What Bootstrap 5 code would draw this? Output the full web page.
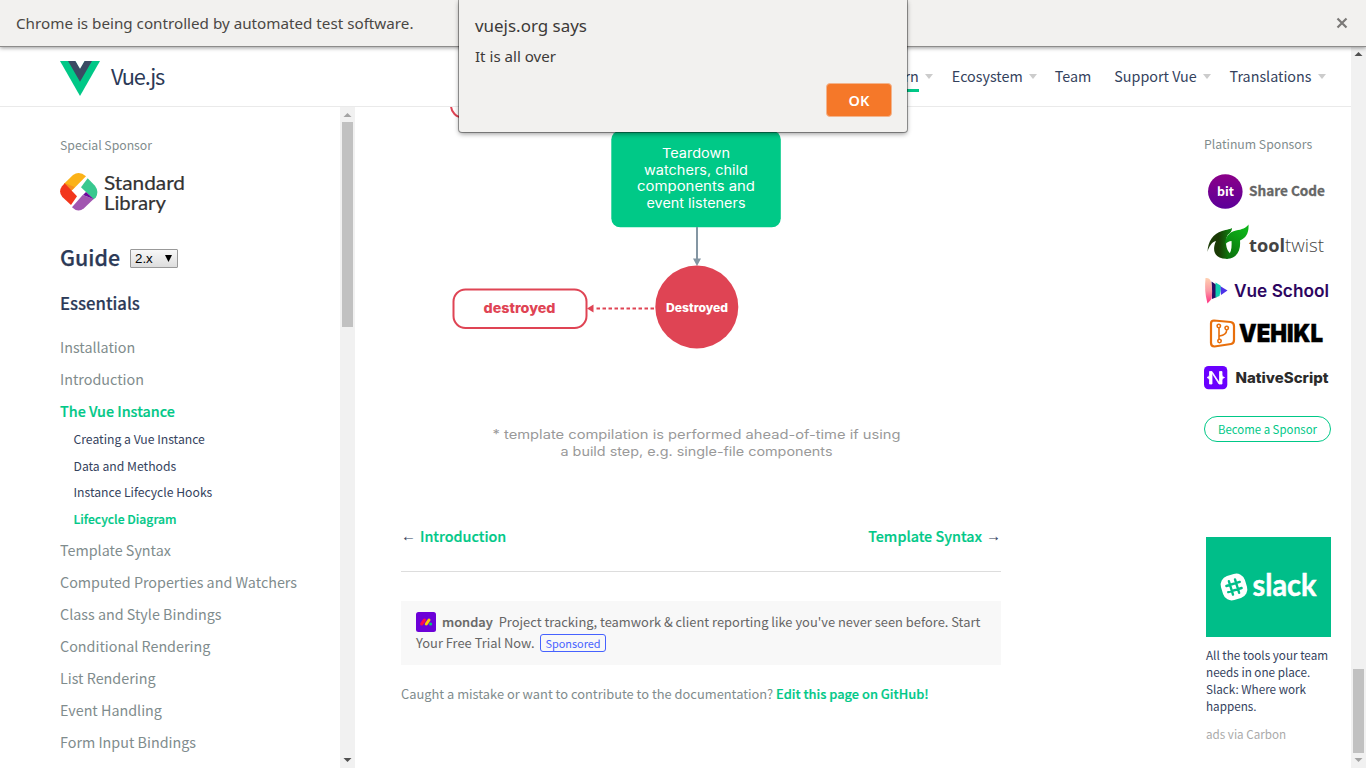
<!DOCTYPE html>
<html lang="en">
<head>
<meta charset="utf-8">
<title>The Vue Instance — Vue.js</title>
<link href="https://cdn.jsdelivr.net/npm/bootstrap@5.3.0/dist/css/bootstrap.min.css" rel="stylesheet">
<style>
body{font-family:"Noto Sans CJK JP",sans-serif;font-size:14.34px;color:#34425d;width:1366px;height:768px}
a{text-decoration:none;color:inherit}
svg{display:block}
.infobar{height:47px;background:#f2f1ef;border-bottom:1px solid #8d8c8b;box-shadow:0 1px 4px rgba(0,0,0,.4);padding:0 18px 0 16px;font-family:"Noto Sans",sans-serif;font-size:15.21px;color:#4a4744;z-index:3}
.body-row,.columns{min-height:0}
.topnav{height:60px;border-bottom:1px solid #eaeaea;padding:0 25.500px 1px 60px}
.brand-name{font-size:21.8px;line-height:30px;margin-left:11px;color:#2c3a57;letter-spacing:-1.15px}
.nav-entry{line-height:24px;color:#34425d;margin-left:19px}
.nav-entry.team{margin-left:18px}
.caret{border:4px solid transparent;border-top:5px solid #ccc;border-bottom:0;margin-left:6px}
.learn-text{box-shadow:0 3px #00c887;padding-bottom:1px;margin-bottom:-1px}
.bar-track{width:15px;background:#f1f1f1}
.bar-thumb{width:11px;background:#c1c1c1}
.side-pane{width:340px;padding:28px 0 0 60px}
.side-note{font-size:12.24px;line-height:20px;color:#7f8c8d}
.guide-head{font-size:21.4px;line-height:30px;font-weight:500;color:#2c3a57;margin-top:22px;-webkit-text-stroke:.25px}
.ver{width:48px;height:19px;border:1px solid #999;border-radius:1px;background:linear-gradient(#f8f8f8,#ddd);font:13.3px/17px "Liberation Sans",sans-serif;-webkit-text-stroke:0;color:#000;padding:0 5px 0 4px;margin:3px 0 0 10px}
.part{font-size:16.7px;line-height:24px;font-weight:500;color:#2c3a57;margin-top:19px;-webkit-text-stroke:.2px}
.menu-list{margin-top:16px}
.menu-list>li{line-height:32px;height:32px;color:#7f8c8d;white-space:nowrap}
.menu-list>li.now,.sub-list .now,.green{color:#00c887;font-weight:500;-webkit-text-stroke:.2px}
.menu-list>li.subs{height:107px;margin:-1px 0 1px 13.5px}
.sub-list li{font-size:12.2px;line-height:26.7px;height:26.7px;color:#34425d}
.doc{width:600px;margin-left:46px}
.pager{line-height:24px;border-bottom:1px solid #ddd;height:48px}
.arrow{font:15px/24px "Liberation Sans",sans-serif}
.ad{background:#f8f8f8;margin-top:29px;height:64px;padding:10px 15px;font-size:12.9px;line-height:21.4px;color:#666;white-space:nowrap}
.ad-name{font-weight:500;margin:0 6px;-webkit-text-stroke:.2px}
.spon{border:1px solid #4662ff;border-radius:3px;color:#4662ff;font-size:10.9px;line-height:16px;padding:0 4px;height:18px;margin-left:6px}
.foot{font-size:12.87px;line-height:24px;color:#7f8c8d;margin-top:16.5px}
.right-pane{width:147px;margin-left:203px;padding-top:27px}
.become{width:127px;height:26px;border:1px solid #00c887;border-radius:13px;color:#00c887;font-size:11.4px;line-height:24.500px;margin-top:16px}
.slack-box{margin:95px 0 0 2px}
.slack-copy{font-size:11.7px;line-height:17px;margin:9px 0 0 2px}
.via{font-size:11.65px;line-height:17px;color:#aaa;margin:11px 0 0 2px}
.js-dialog{left:459px;top:0;width:448px;height:132px;background:#f2f1ef;border-radius:0 0 3px 3px;box-shadow:0 0 0 1px rgba(0,0,0,.35),0 2px 5px rgba(0,0,0,.4);z-index:5;padding:13px 15px 0 16px;font-family:"Noto Sans",sans-serif;color:#3d3a38}
.dlg-title{font-size:16.95px;line-height:26px}
.dlg-text{font-size:15.1px;line-height:24px;margin-top:5px}
.dlg-ok{width:66px;height:34px;background:#f57829;border:1px solid #f3b48c;border-radius:4px;color:#fff;font:600 14.500px/32px "Noto Sans",sans-serif;margin-top:15px}
.diagram{font-family:Inter,sans-serif}
</style>
</head>
<body class="overflow-hidden position-relative d-flex flex-column bg-white">
<div class="infobar d-flex align-items-center justify-content-between flex-shrink-0 position-relative">
  <span>Chrome is being controlled by automated test software.</span>
  <svg width="12" height="12" viewBox="0 0 12 12"><path d="M1.500 1.500l9 9M10.500 1.500l-9 9" stroke="#7b7977" stroke-width="2.200"/></svg>
</div>
<div class="body-row d-flex flex-fill">
  <div class="d-flex flex-column flex-fill">
    <nav class="topnav d-flex align-items-center justify-content-between flex-shrink-0">
      <a class="d-flex align-items-center" href="#">
        <svg class="mt-1" width="40" height="35" viewBox="0 0 40 35"><path d="M0 0h40L20 35z" fill="#00c887"/><path d="M8 0h7.500L20 7.500 24.500 0H32L20 20.700z" fill="#3a4a63"/><path d="M15.500 0h9L20 7.800z" fill="#fff"/></svg>
        <span class="brand-name">Vue.js</span>
      </a>
      <div class="d-flex align-items-center">
        <a class="nav-entry d-flex align-items-center"><span class="learn-text">Learn</span><i class="caret"></i></a>
        <a class="nav-entry d-flex align-items-center">Ecosystem<i class="caret"></i></a>
        <a class="nav-entry team">Team</a>
        <a class="nav-entry d-flex align-items-center ps-1">Support Vue<i class="caret"></i></a>
        <a class="nav-entry d-flex align-items-center">Translations<i class="caret"></i></a>
      </div>
    </nav>
    <div class="columns d-flex flex-fill">
      <aside class="side-pane overflow-hidden flex-shrink-0">
        <div class="side-note">Special Sponsor</div>
        <svg style="margin-top:10px" width="130" height="55" viewBox="60 165 130 55">
          <g transform="translate(40 165) scale(.3333)">
            <path d="M72 56L99 30Q118 16 138 34L98 74L76 68z" fill="#fbb217"/>
            <path d="M73 54L104 66L92 80z" fill="#f7901e"/>
            <path d="M74 55L111 94L93 120L67 96Q54 80 66 64z" fill="#f2361c"/>
            <path d="M143 40L165 62Q178 80 167 98L161 103L123 67z" fill="#38c88f"/>
            <path d="M128 90L161 102L132 130Q114 145 96 127z" fill="#a155b0"/>
            <path d="M138 81L162 103L129 90z" fill="#6a0a9a"/>
          </g>
          <g font-family="Lato,sans-serif" font-size="20" fill="#333" stroke="#333" stroke-width=".2">
            <text x="104" y="189.600" textLength="81" lengthAdjust="spacingAndGlyphs">Standard</text>
            <text x="104" y="210.200" textLength="62" lengthAdjust="spacingAndGlyphs">Library</text>
          </g>
        </svg>
        <div class="guide-head d-flex align-items-center">Guide
          <span class="ver d-flex justify-content-between align-items-center"><span>2.x</span><svg width="7" height="7" viewBox="0 0 7 7"><path d="M0 0h7L3.500 7z"/></svg></span>
        </div>
        <div class="part">Essentials</div>
        <ul class="menu-list list-unstyled mb-0">
          <li>Installation</li>
          <li>Introduction</li>
          <li class="now">The Vue Instance</li>
          <li class="subs">
            <ul class="sub-list list-unstyled">
              <li>Creating a Vue Instance</li>
              <li>Data and Methods</li>
              <li>Instance Lifecycle Hooks</li>
              <li class="now">Lifecycle Diagram</li>
            </ul>
          </li>
          <li>Template Syntax</li>
          <li>Computed Properties and Watchers</li>
          <li>Class and Style Bindings</li>
          <li>Conditional Rendering</li>
          <li>List Rendering</li>
          <li>Event Handling</li>
          <li>Form Input Bindings</li>
        </ul>
      </aside>
      <div class="bar-track d-flex flex-column align-items-center flex-shrink-0">
        <svg width="15" height="15" viewBox="0 0 15 15"><path d="M3.500 10L7.500 6l4 4z" fill="#a3a3a3"/></svg>
        <div class="bar-thumb" style="height:205px"></div>
        <svg class="mt-auto" width="15" height="15" viewBox="0 0 15 15"><path d="M3.500 5l4 4 4-4z" fill="#505050"/></svg>
      </div>
      <main class="doc flex-shrink-0">
        <svg class="diagram" width="600" height="417" viewBox="401 107 600 417">
          <rect x="451" y="78" width="133" height="39.500" rx="12" fill="#fff" stroke="#df4454" stroke-width="2"/>
          <rect x="611.300" y="130.500" width="169.500" height="96.800" rx="9" fill="#00c987"/>
          <g fill="#fff" font-size="13" text-anchor="middle">
            <text x="696" y="158" textLength="68" lengthAdjust="spacingAndGlyphs">Teardown</text>
            <text x="696" y="174.700" textLength="104" lengthAdjust="spacingAndGlyphs">watchers, child</text>
            <text x="696" y="191.400" textLength="118" lengthAdjust="spacingAndGlyphs">components and</text>
            <text x="696" y="208" textLength="99" lengthAdjust="spacingAndGlyphs">event listeners</text>
          </g>
          <path d="M697 227v33" stroke="#8496a3" stroke-width="2"/>
          <path d="M693 258.500h8l-4 7.500z" fill="#8496a3"/>
          <circle cx="696.800" cy="307" r="41.500" fill="#df4454"/>
          <text x="697" y="312" fill="#fff" font-size="11.500" font-weight="800" text-anchor="middle" textLength="62" lengthAdjust="spacingAndGlyphs">Destroyed</text>
          <path d="M654 308.500H595" stroke="#df4454" stroke-width="2" stroke-dasharray="3.500 2.500"/>
          <path d="M587 308.500l6.500-4v8z" fill="#df4454"/>
          <rect x="453.500" y="289.500" width="133" height="38.500" rx="12" fill="#fff" stroke="#df4454" stroke-width="2"/>
          <text x="519.500" y="313" fill="#df4454" font-size="13.500" font-weight="800" text-anchor="middle" textLength="72" lengthAdjust="spacingAndGlyphs">destroyed</text>
          <g fill="#999" font-size="12.800" text-anchor="middle">
            <text x="696.500" y="439" textLength="408" lengthAdjust="spacingAndGlyphs">* template compilation is performed ahead-of-time if using</text>
            <text x="696.500" y="456" textLength="272" lengthAdjust="spacingAndGlyphs">a build step, e.g. single-file components</text>
          </g>
        </svg>
        <div class="pager d-flex justify-content-between">
          <div class="d-flex gap-1"><span class="arrow">←</span><a class="green" href="#">Introduction</a></div>
          <div class="d-flex gap-1"><a class="green" href="#">Template Syntax</a><span class="arrow">→</span></div>
        </div>
        <div class="ad">
          <div class="d-flex">
            <svg style="margin-top:1px" width="20" height="20" viewBox="0 0 20 20"><rect width="20" height="20" rx="2.500" fill="#6c00d8"/><path d="M5.600 12L8.500 8" stroke="#ff0a48" stroke-width="3" stroke-linecap="round"/><path d="M10.300 12L13 8" stroke="#ffcb00" stroke-width="3" stroke-linecap="round"/><circle cx="14.600" cy="12" r="1.600" fill="#00ca72"/></svg>
            <span class="ad-name">monday</span>
            <span>Project tracking, teamwork &amp; client reporting like you've never seen before. Start</span>
          </div>
          <div class="d-flex align-items-center"><span>Your Free Trial Now.</span><span class="spon">Sponsored</span></div>
        </div>
        <div class="foot">Caught a mistake or want to contribute to the documentation? <a class="green" href="#">Edit this page on GitHub!</a></div>
      </main>
      <aside class="right-pane flex-shrink-0">
        <div class="side-note">Platinum Sponsors</div>
        <svg style="margin-top:14px" width="127" height="48" viewBox="1204 168 127 48">
          <defs><linearGradient id="gBit" x2="0" y2="1"><stop stop-color="#8b0088"/><stop offset="1" stop-color="#5c0099"/></linearGradient></defs>
          <circle cx="1225.300" cy="191.500" r="17.300" fill="url(#gBit)"/>
          <g font-weight="700" font-size="12.500"><text x="1217" y="196" fill="#fff" textLength="17" lengthAdjust="spacingAndGlyphs">bit</text><text x="1249" y="196" fill="#666" stroke="#666" stroke-width=".3" font-size="13.500" textLength="76" lengthAdjust="spacingAndGlyphs">Share Code</text></g>
        </svg>
        <svg width="127" height="48" viewBox="1204 216 127 48">
          <defs><linearGradient id="gDark"><stop stop-color="#1c3c08"/><stop offset=".45" stop-color="#1a3a05"/><stop offset="1" stop-color="#0c8a10"/></linearGradient><linearGradient id="gLite" x1="0" y1="1" x2=".5" y2="0"><stop stop-color="#0b6b0c"/><stop offset="1" stop-color="#0cb218"/></linearGradient></defs>
          <path d="M1207.500 252C1208 241 1213 234 1222 231C1227 229.500 1231 229 1232 228C1232 231 1230.500 233 1228 234.500C1225 239 1225 250 1231 254L1228 258.700C1216 259.500 1211 252 1216 241C1212 242 1209 246 1207.500 252z" fill="url(#gDark)"/>
          <path d="M1248.500 224.500C1249 233 1246 238 1240 240.500C1241 250 1237 259.500 1225.500 258.700C1231 254 1232 249 1231.500 241C1229 241 1227 242 1225 245C1225 237 1229 232 1236 230.500C1242 229.500 1246 228 1248.500 224.500z" fill="url(#gLite)"/>
          <g font-family="Open Sans,sans-serif" font-size="18" fill="#444"><text x="1249" y="251.500" font-weight="700" textLength="36" lengthAdjust="spacingAndGlyphs">tool</text><text x="1285" y="251.500" font-weight="300" textLength="39" lengthAdjust="spacingAndGlyphs">twist</text></g>
        </svg>
        <svg width="127" height="48" viewBox="1204 264 127 48">
          <defs><linearGradient id="gPink" x2="0" y2="1"><stop stop-color="#ffd0b0"/><stop offset=".5" stop-color="#fb9aa5"/><stop offset="1" stop-color="#ff2f80"/></linearGradient></defs>
          <path d="M1220 286L1227.500 290.500L1221 295z" fill="#4d32e8"/>
          <path d="M1211.500 281.500L1218 286L1217 297L1212 299z" fill="#2a0d66"/>
          <path d="M1215.500 297.500V282.500L1220.500 285.500Q1221 291 1219.500 296z" fill="#10cdb0"/>
          <path d="M1205.500 278Q1210 277.500 1211 282Q1213 291 1211.500 299L1207.500 303.500Q1204 291 1205.500 278z" fill="url(#gPink)"/>
          <text x="1234" y="296.600" font-family="Inter,sans-serif" font-size="17.500" font-weight="600" fill="#2d0560" textLength="95" lengthAdjust="spacingAndGlyphs">Vue School</text>
        </svg>
        <svg width="127" height="44" viewBox="1204 312 127 44">
          <path d="M1214 320.500L1230.500 322Q1234 322.500 1234 326V340Q1234 343.500 1231 344L1214.500 346.500Q1211 346.500 1211 343V323.500Q1211 320.500 1214 320.500z" fill="#fff" stroke="#e86f0c" stroke-width="2.200"/>
          <g fill="none" stroke="#e86f0c" stroke-width="1.600"><circle cx="1218.800" cy="326" r="1.700"/><circle cx="1226.700" cy="328" r="1.700"/><circle cx="1219.500" cy="341" r="1.700"/><path d="M1219 328V339M1219.500 336Q1226.500 335 1226.700 330"/></g>
          <text x="1239" y="342.300" font-family="Inter,sans-serif" font-size="25" font-weight="900" stroke="#000" stroke-width=".4" textLength="84" lengthAdjust="spacingAndGlyphs">VEHIKL</text>
        </svg>
        <svg width="127" height="44" viewBox="1204 356 127 44">
          <rect x="1204" y="366" width="23.300" height="23.300" rx="4.500" fill="#6a00ff"/>
          <path d="M1207 377.500Q1209.500 377 1209.500 375V371.500H1212L1219.500 383V371.500H1222V375Q1222 377 1224.500 377.500Q1222 378 1222 380V384H1219L1212 373V384H1209.500V380Q1209.500 378 1207 377.500z" fill="#fff" stroke="#fff" stroke-width=".800"/>
          <text x="1235.500" y="383" font-family="Inter,sans-serif" font-size="14" font-weight="800" fill="#2b2b2b" textLength="93" lengthAdjust="spacingAndGlyphs">NativeScript</text>
        </svg>
        <div class="become text-center">Become a Sponsor</div>
        <svg class="slack-box" width="125" height="100" viewBox="0 0 125 100">
          <rect width="125" height="100" fill="#00be89"/>
          <g transform="rotate(-17 28 50)"><rect x="15.500" y="37.500" width="25" height="25" rx="9" fill="#fff"/><path d="M24.800 43v14M31.200 43v14M21 46.800h14M21 53.200h14" stroke="#00be89" stroke-width="2.400" stroke-linecap="round"/></g>
          <text x="46.500" y="59" font-family="Lato,sans-serif" font-size="31" font-weight="700" fill="#fff" stroke="#fff" stroke-width=".5" textLength="64" lengthAdjust="spacingAndGlyphs">slack</text>
        </svg>
        <div class="slack-copy">All the tools your team<br>needs in one place.<br>Slack: Where work<br>happens.</div>
        <div class="via">ads via Carbon</div>
      </aside>
    </div>
  </div>
  <div class="bar-track d-flex flex-column align-items-center flex-shrink-0">
    <svg width="15" height="15" viewBox="0 0 15 15"><path d="M3.500 9l4-4 4 4z" fill="#505050"/></svg>
    <div class="bar-thumb mt-auto" style="height:84px"></div>
    <svg width="15" height="15" viewBox="0 0 15 15"><path d="M3.500 5l4 4 4-4z" fill="#a3a3a3"/></svg>
  </div>
</div>
<div class="js-dialog position-absolute d-flex flex-column">
  <div class="dlg-title">vuejs.org says</div>
  <div class="dlg-text">It is all over</div>
  <button class="dlg-ok p-0 align-self-end">OK</button>
</div>
</body>
</html>
